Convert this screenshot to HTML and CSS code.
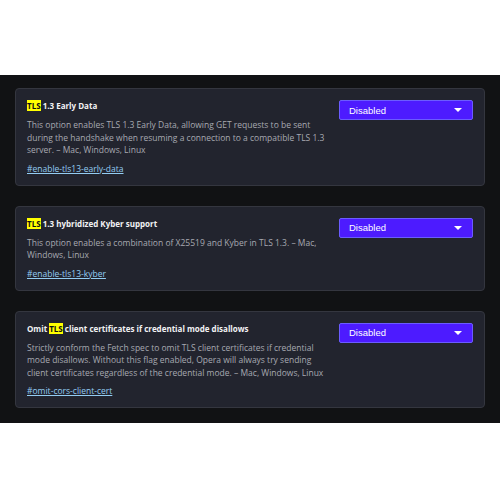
FILE: index.html
```html
<!DOCTYPE html>
<html>
<head>
  <title>Experiments</title>
  <link rel="stylesheet" href="styles.css">
</head>
<body>
  <div class="flags">
    <div class="flag">
      <div class="flag-info">
        <h3 class="flag-name"><mark>TLS</mark> 1.3 Early Data</h3>
        <p class="flag-desc">This option enables TLS 1.3 Early Data, allowing GET requests to be sent during the handshake when resuming a connection to a compatible TLS 1.3 server. – Mac, Windows, Linux</p>
        <a class="flag-link" href="#enable-tls13-early-data">#enable-tls13-early-data</a>
      </div>
      <div class="select">Disabled <span class="arrow"></span></div>
    </div>

    <div class="flag">
      <div class="flag-info">
        <h3 class="flag-name"><mark>TLS</mark> 1.3 hybridized Kyber support</h3>
        <p class="flag-desc">This option enables a combination of X25519 and Kyber in TLS 1.3. – Mac, Windows, Linux</p>
        <a class="flag-link" href="#enable-tls13-kyber">#enable-tls13-kyber</a>
      </div>
      <div class="select">Disabled <span class="arrow"></span></div>
    </div>

    <div class="flag">
      <div class="flag-info">
        <h3 class="flag-name">Omit <mark>TLS</mark> client certificates if credential mode disallows</h3>
        <p class="flag-desc">Strictly conform the Fetch spec to omit TLS client certificates if credential mode disallows. Without this flag enabled, Opera will always try sending client certificates regardless of the credential mode. – Mac, Windows, Linux</p>
        <a class="flag-link" href="#omit-cors-client-cert">#omit-cors-client-cert</a>
      </div>
      <div class="select">Disabled <span class="arrow"></span></div>
    </div>
  </div>
</body>
</html>
```

FILE: styles.css
```css
body {
  margin: 0;
  background: #ffffff;
  font-family: 'Open Sans', sans-serif;
}

.flags {
  margin-top: 75px;
  height: 348px;
  box-sizing: border-box;
  padding: 13px 15px;
  background: #111214;
  display: flex;
  flex-direction: column;
  gap: 20px;
}

.flag {
  display: grid;
  grid-template-columns: 1fr 134px;
  align-items: start;
  gap: 12px;
  padding: 11px 11px 10px 11px;
  background: #22242e;
  border: 1px solid #34363f;
  border-radius: 4px;
}

.flag-info {
  display: flex;
  flex-direction: column;
  align-items: flex-start;
}

.flag-name {
  margin: 0;
  font-size: 8px;
  line-height: 12px;
  font-weight: 700;
  color: #f2f2f4;
}

mark {
  background: #ffff00;
  color: #111;
}

.flag-desc {
  margin: 7px 0 6px;
  max-width: 300px;
  font-size: 8.5px;
  line-height: 12.5px;
  color: #a7a9b1;
}

.flag-link {
  font-size: 8.5px;
  line-height: 12px;
  color: #93ccf2;
}

.select {
  height: 20px;
  box-sizing: border-box;
  padding: 0 10px 0 9px;
  display: flex;
  align-items: center;
  justify-content: space-between;
  background: #4d1bff;
  border: 1px solid #6b5cff;
  border-radius: 2px;
  color: #ffffff;
  font-family: 'Liberation Sans', Arial, sans-serif;
  font-size: 9.5px;
}

.arrow {
  width: 0;
  height: 0;
  border-left: 4px solid transparent;
  border-right: 4px solid transparent;
  border-top: 4px solid #ffffff;
}
```
